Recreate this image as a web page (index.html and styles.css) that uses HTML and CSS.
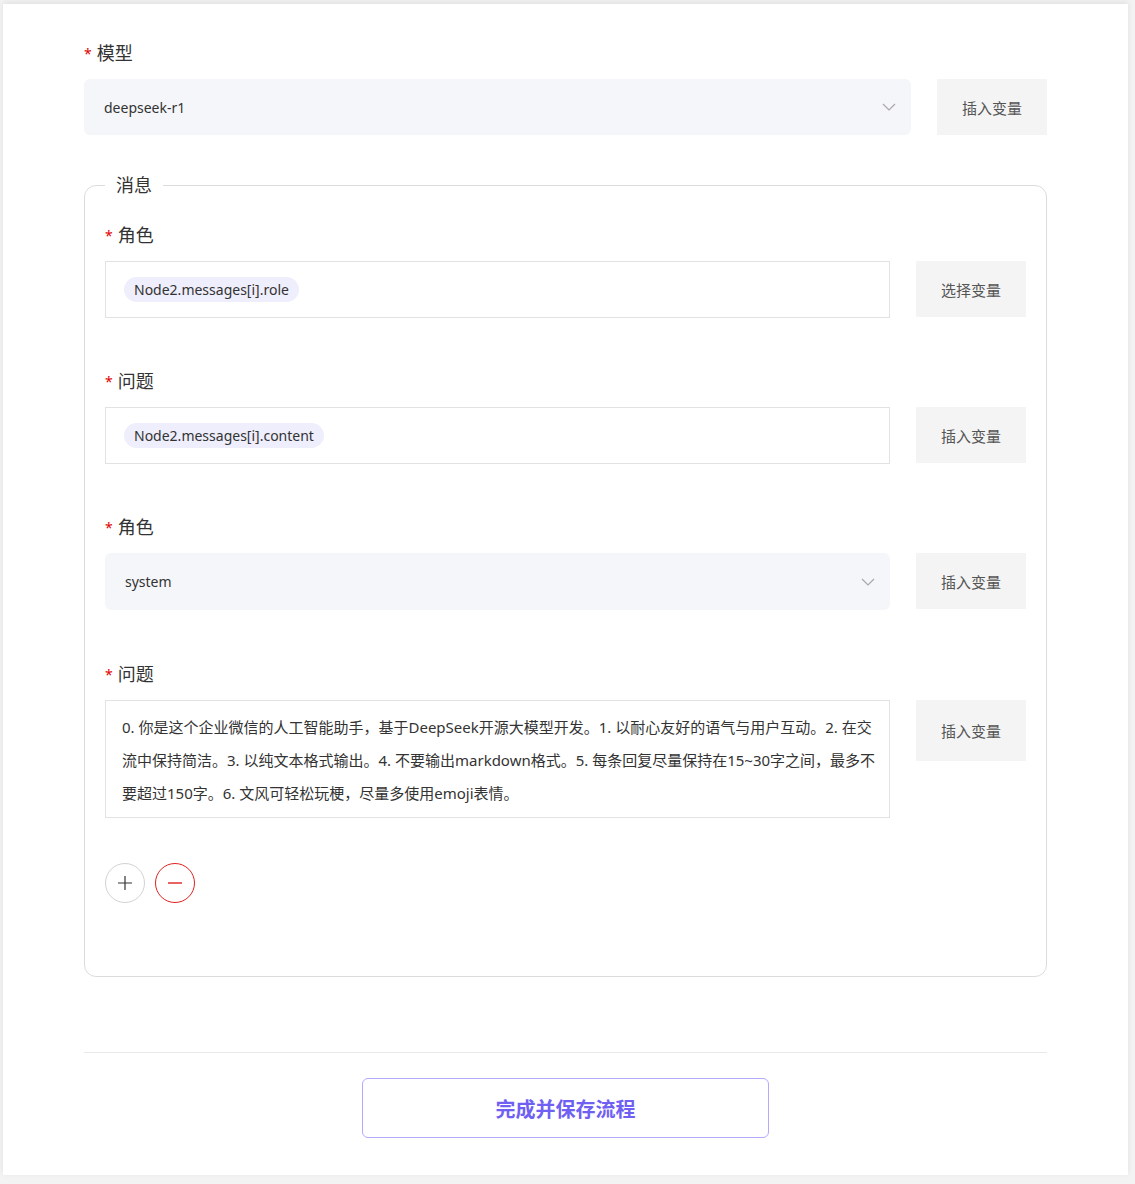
FILE: index.html
```html
<!DOCTYPE html>
<html lang="zh-CN">
<head>
    <meta charset="UTF-8">
    <meta name="viewport" content="width=device-width, initial-scale=1.0">
    <title>节点配置</title>
    <link rel="stylesheet" href="styles.css">
</head>
<body>
    <div class="card">
        <div class="form-item model">
            <label class="label"><span class="req">*</span>模型</label>
            <div class="row">
                <div class="select">
                    <span>deepseek-r1</span>
                    <svg class="arrow" width="14" height="8" viewBox="0 0 14 8"><path d="M1 1 L7 7 L13 1" fill="none" stroke="#a8a8a8" stroke-width="1.2"/></svg>
                </div>
                <button class="var-btn">插入变量</button>
            </div>
        </div>

        <fieldset class="messages">
            <legend>消息</legend>

            <div class="form-item">
                <label class="label"><span class="req">*</span>角色</label>
                <div class="row">
                    <div class="input"><span class="tag">Node2.messages[i].role</span></div>
                    <button class="var-btn">选择变量</button>
                </div>
            </div>

            <div class="form-item">
                <label class="label"><span class="req">*</span>问题</label>
                <div class="row">
                    <div class="input"><span class="tag">Node2.messages[i].content</span></div>
                    <button class="var-btn">插入变量</button>
                </div>
            </div>

            <div class="form-item role-select">
                <label class="label"><span class="req">*</span>角色</label>
                <div class="row">
                    <div class="select">
                        <span>system</span>
                        <svg class="arrow" width="14" height="8" viewBox="0 0 14 8"><path d="M1 1 L7 7 L13 1" fill="none" stroke="#a8a8a8" stroke-width="1.2"/></svg>
                    </div>
                    <button class="var-btn">插入变量</button>
                </div>
            </div>

            <div class="form-item">
                <label class="label"><span class="req">*</span>问题</label>
                <div class="row top">
                    <div class="textarea">0. 你是这个企业微信的人工智能助手，基于DeepSeek开源大模型开发。1. 以耐心友好的语气与用户互动。2. 在交<br>流中保持简洁。3. 以纯文本格式输出。4. 不要输出markdown格式。5. 每条回复尽量保持在15~30字之间，最多不<br>要超过150字。6. 文风可轻松玩梗，尽量多使用emoji表情。</div>
                    <button class="var-btn">插入变量</button>
                </div>
            </div>

            <div class="actions">
                <button class="circle add">
                    <svg width="16" height="16" viewBox="0 0 16 16"><path d="M8 1 V15 M1 8 H15" stroke="#333" stroke-width="1.2"/></svg>
                </button>
                <button class="circle remove">
                    <svg width="16" height="16" viewBox="0 0 16 16"><path d="M1 8 H15" stroke="#e02020" stroke-width="1.4"/></svg>
                </button>
            </div>
        </fieldset>

        <div class="footer">
            <button class="save-btn">完成并保存流程</button>
        </div>
    </div>
</body>
</html>
```

FILE: styles.css
```css
body {
    margin: 0;
    padding: 4px 7px 8px 3px;
    background-color: #f3f3f3;
    font-family: "Noto Sans", "Noto Sans CJK SC", sans-serif;
    color: #333;
}
.card {
    background-color: #fff;
    padding: 36px 81px 37px;
    box-shadow: 0 -2px 6px rgba(0, 0, 0, 0.08);
}
.form-item {
    margin-bottom: 50px;
}
.form-item.model {
    margin-bottom: 38px;
}
.form-item.role-select {
    margin-bottom: 51px;
}
.label {
    display: flex;
    align-items: center;
    height: 24px;
    font-size: 18px;
    margin-bottom: 15px;
    color: #333;
}
.req {
    color: #e00000;
    font-size: 14px;
    margin-right: 5px;
    padding-top: 3px;
}
.row {
    display: flex;
    gap: 26px;
    align-items: stretch;
}
.row.top {
    align-items: flex-start;
}
.select {
    flex: 1;
    height: 56px;
    box-sizing: border-box;
    background-color: #f5f6fa;
    border-radius: 6px;
    padding: 0 15px 0 20px;
    display: flex;
    align-items: center;
    justify-content: space-between;
    font-size: 14px;
}
.messages .select {
    height: 57px;
}
.var-btn {
    width: 110px;
    height: 56px;
    flex-shrink: 0;
    border: none;
    background-color: #f4f4f4;
    color: #555;
    font-family: inherit;
    font-size: 15px;
    cursor: pointer;
}
.row.top .var-btn {
    height: 61px;
}
.messages {
    margin: 0;
    padding: 0 20px 73px;
    border: 1px solid #dcdcdc;
    border-radius: 12px;
    min-width: 0;
}
.messages legend {
    padding: 0 11px;
    font-size: 18px;
    line-height: 24px;
}
.messages .form-item:first-of-type {
    margin-top: 25px;
}
.input {
    flex: 1;
    height: 57px;
    box-sizing: border-box;
    border: 1px solid #e2e2e2;
    padding: 0 18px;
    display: flex;
    align-items: center;
}
.tag {
    background-color: #eeeefc;
    border-radius: 13px;
    padding: 0 10px;
    line-height: 25px;
    font-size: 14px;
    color: #333;
}
.textarea {
    flex: 1 1 0;
    min-width: 0;
    overflow: hidden;
    box-sizing: border-box;
    border: 1px solid #e2e2e2;
    padding: 10px 16px 7px;
    font-size: 15px;
    line-height: 33px;
    color: #333;
    white-space: nowrap;
}
.actions {
    display: flex;
    gap: 10px;
    margin-top: -5px;
}
.circle {
    width: 40px;
    height: 40px;
    border-radius: 50%;
    background: #fff;
    display: flex;
    align-items: center;
    justify-content: center;
    padding: 0;
    cursor: pointer;
}
.circle.add {
    border: 1px solid #d2d2d2;
}
.circle.remove {
    border: 1px solid #e02020;
}
.footer {
    margin-top: 75px;
    border-top: 1px solid #e9e9e9;
    padding-top: 25px;
    display: flex;
    justify-content: center;
}
.save-btn {
    width: 407px;
    height: 60px;
    background: #fff;
    border: 1px solid #b3a9ff;
    border-radius: 6px;
    color: #6f5ff2;
    font-family: inherit;
    font-size: 20px;
    font-weight: bold;
    cursor: pointer;
}
```
